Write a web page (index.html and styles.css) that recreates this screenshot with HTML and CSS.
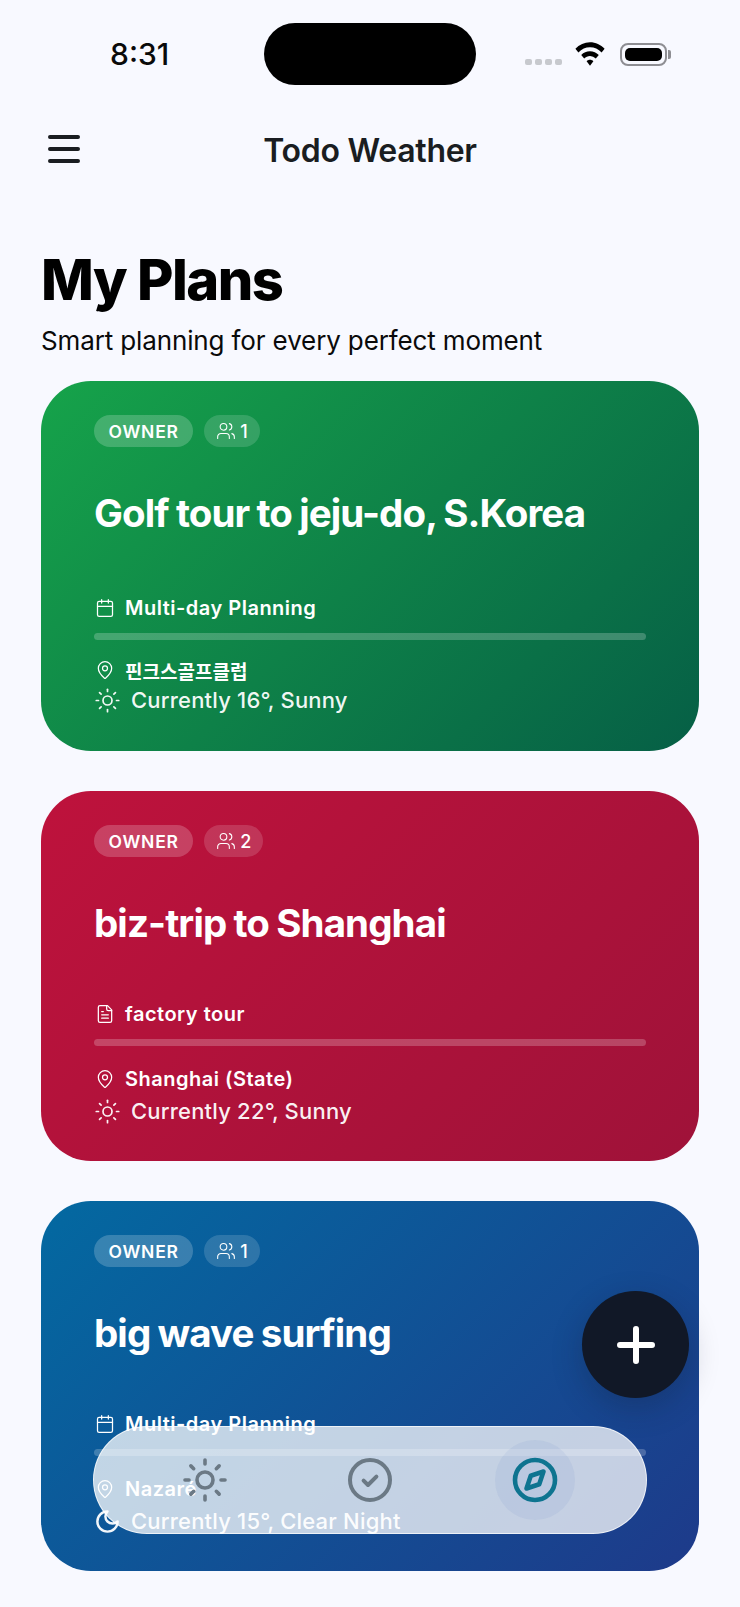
FILE: index.html
```html
<!DOCTYPE html>
<html lang="en">
<head>
<meta charset="utf-8">
<title>Todo Weather</title>
<link rel="stylesheet" href="styles.css">
</head>
<body>
<svg class="defs" width="0" height="0" aria-hidden="true">
  <defs>
    <symbol id="i-users" viewBox="0 0 24 24"><path d="M16 21v-2a4 4 0 0 0-4-4H6a4 4 0 0 0-4 4v2"/><circle cx="9" cy="7" r="4"/><path d="M22 21v-2a4 4 0 0 0-3-3.87"/><path d="M16 3.13a4 4 0 0 1 0 7.75"/></symbol>
    <symbol id="i-calendar" viewBox="0 0 24 24"><path d="M8 2v4"/><path d="M16 2v4"/><rect x="3" y="4" width="18" height="18" rx="2"/><path d="M3 10h18"/></symbol>
    <symbol id="i-file" viewBox="0 0 24 24"><path d="M15 2H6a2 2 0 0 0-2 2v16a2 2 0 0 0 2 2h12a2 2 0 0 0 2-2V7Z"/><path d="M14 2v4a2 2 0 0 0 2 2h4"/><path d="M10 9H8"/><path d="M16 13H8"/><path d="M16 17H8"/></symbol>
    <symbol id="i-pin" viewBox="0 0 24 24"><path d="M20 10c0 5-5.5 10.2-7.4 11.8a1 1 0 0 1-1.2 0C9.5 20.2 4 15 4 10a8 8 0 0 1 16 0"/><circle cx="12" cy="10" r="3"/></symbol>
    <symbol id="i-sun" viewBox="0 0 24 24"><circle cx="12" cy="12" r="4"/><path d="M12 2v2"/><path d="M12 20v2"/><path d="m4.93 4.93 1.41 1.41"/><path d="m17.66 17.66 1.41 1.41"/><path d="M2 12h2"/><path d="M20 12h2"/><path d="m6.34 17.66-1.41 1.41"/><path d="m19.07 4.93-1.41 1.41"/></symbol>
    <symbol id="i-moon" viewBox="0 0 24 24"><path d="M12 3a6 6 0 0 0 9 9 9 9 0 1 1-9-9Z"/></symbol>
  </defs>
</svg>

<div class="screen">
  <div class="status">
    <span class="time">8:31</span>
    <span class="island"></span>
    <div class="status-icons">
      <span class="dots"><i></i><i></i><i></i><i></i></span>
      <svg class="wifi" viewBox="0 3 32 21" preserveAspectRatio="none"><path d="M16 3.2c5.600 0 10.700 2.100 14.600 5.700l-3 3.200A17 17 0 0 0 16 7.500a17 17 0 0 0-11.600 4.600l-3-3.200A21.400 21.400 0 0 1 16 3.200Z"/><path d="M16 11c3.400 0 6.400 1.200 8.800 3.300l-3 3.200A8.700 8.700 0 0 0 16 15.300c-2.200 0-4.200.8-5.800 2.200l-3-3.200A13 13 0 0 1 16 11Z"/><path d="M16 18.600c1.300 0 2.500.5 3.400 1.300L16 23.800l-3.400-3.900c.9-.8 2.100-1.300 3.400-1.300Z"/></svg>
      <span class="battery"><span class="battery-fill"></span></span>
    </div>
  </div>

  <header class="topbar">
    <svg class="menu" viewBox="0 0 32 28"><path d="M2 2h28M2 14h28M2 26h28"/></svg>
    <h2 class="app-title">Todo Weather</h2>
  </header>

  <section class="intro">
    <h1>My Plans</h1>
    <p>Smart planning for every perfect moment</p>
  </section>

  <main class="plans">
    <article class="card card-green">
      <div class="pills">
        <span class="pill pill-owner">OWNER</span>
        <span class="pill pill-count"><svg class="ico ico-users"><use href="#i-users"/></svg>1</span>
      </div>
      <h3 class="plan-title">Golf tour to jeju-do, S.Korea</h3>
      <div class="row note note-tall"><svg class="ico"><use href="#i-calendar"/></svg>Multi-day Planning</div>
      <div class="track"></div>
      <div class="row place place-close"><svg class="ico"><use href="#i-pin"/></svg><span class="hangul">핀크스골프클럽</span></div>
      <div class="weather"><svg class="ico ico-weather"><use href="#i-sun"/></svg>Currently 16°, Sunny</div>
    </article>

    <article class="card card-red">
      <div class="pills">
        <span class="pill pill-owner">OWNER</span>
        <span class="pill pill-count"><svg class="ico ico-users"><use href="#i-users"/></svg>2</span>
      </div>
      <h3 class="plan-title">biz-trip to Shanghai</h3>
      <div class="row note"><svg class="ico"><use href="#i-file"/></svg>factory tour</div>
      <div class="track"></div>
      <div class="row place"><svg class="ico"><use href="#i-pin"/></svg>Shanghai (State)</div>
      <div class="weather"><svg class="ico ico-weather"><use href="#i-sun"/></svg>Currently 22°, Sunny</div>
    </article>

    <article class="card card-blue">
      <div class="pills">
        <span class="pill pill-owner">OWNER</span>
        <span class="pill pill-count"><svg class="ico ico-users"><use href="#i-users"/></svg>1</span>
      </div>
      <h3 class="plan-title">big wave surfing</h3>
      <div class="row note"><svg class="ico"><use href="#i-calendar"/></svg>Multi-day Planning</div>
      <div class="track"></div>
      <div class="row place"><svg class="ico"><use href="#i-pin"/></svg>Nazaré</div>
      <div class="weather"><svg class="ico ico-weather ico-moon"><use href="#i-moon"/></svg>Currently 15°, Clear Night</div>
    </article>
  </main>

  <button class="fab" aria-label="Add plan"><svg viewBox="0 0 38 38"><path d="M19 3v32M3 19h32"/></svg></button>

  <nav class="tabbar">
    <a class="tab"><svg class="tab-icon tab-sun"><use href="#i-sun"/></svg></a>
    <a class="tab"><svg class="tab-icon" viewBox="0 0 24 24"><circle cx="12" cy="12" r="10"/><path d="m8.800 12.300 2.200 2.200 4.200-4.200"/></svg></a>
    <a class="tab tab-active"><span class="tab-bubble"><svg class="tab-icon" viewBox="0 0 24 24"><circle cx="12" cy="12" r="10"/><polygon points="16.240 7.760 14.120 14.120 7.760 16.240 9.880 9.880"/></svg></span></a>
  </nav>
</div>
</body>
</html>
```

FILE: styles.css
```css
* { box-sizing: border-box; }

html, body {
  margin: 0;
  padding: 0;
  background: #f8f9ff;
}

body {
  font-family: Inter, "Noto Sans CJK KR", "Liberation Sans", sans-serif;
  color: #000;
}

.defs { position: absolute; }

.screen {
  position: relative;
  width: 740px;
  height: 1607px;
  overflow: hidden;
  background: #f8f9ff;
}

/* status bar */
.status {
  display: grid;
  grid-template-columns: 264px 212px 1fr;
  height: 62px;
  margin-top: 23px;
  align-items: center;
}
.time {
  justify-self: start;
  padding-left: 110px;
  font-size: 30px;
  font-weight: 500;
  line-height: 62px;
  color: #0a0a0a;
}
.island {
  height: 62px;
  border-radius: 31px;
  background: #000;
}
.status-icons {
  display: flex;
  align-items: center;
  padding-left: 49px;
}
.dots {
  display: flex;
  gap: 3px;
  margin-top: 16px;
  margin-right: 12px;
}
.dots i {
  width: 7px;
  height: 6px;
  border-radius: 2px;
  background: #c7c9ce;
}
.wifi {
  width: 32px;
  height: 24px;
  margin-right: 14px;
  fill: #000;
}
.battery {
  position: relative;
  display: block;
  width: 47px;
  height: 23px;
  padding: 3px;
  border: 2px solid #8e8e93;
  border-radius: 8px;
}
.battery::after {
  content: "";
  position: absolute;
  right: -6px;
  top: 5px;
  width: 3px;
  height: 9px;
  border-radius: 0 2px 2px 0;
  background: #8e8e93;
}
.battery-fill {
  display: block;
  height: 100%;
  border-radius: 5px;
  background: #000;
}

/* top bar */
.topbar {
  position: relative;
  display: flex;
  align-items: center;
  justify-content: center;
  height: 64px;
  margin-top: 33px;
}
.menu {
  position: absolute;
  left: 48px;
  top: 17px;
  width: 32px;
  height: 28px;
  fill: none;
  stroke: #1a1d21;
  stroke-width: 4;
  stroke-linecap: round;
}
.app-title {
  margin: 0;
  font-size: 32px;
  font-weight: 600;
  letter-spacing: -0.27px;
  color: #1a1d21;
}

/* intro */
.intro { padding: 0 41px; margin-top: 65px; }
.intro h1 {
  margin: 0;
  font-size: 56px;
  line-height: 66px;
  font-weight: 800;
  letter-spacing: -1.500px;
  color: #000;
}
.intro p {
  margin: 10px 0 0;
  font-size: 26px;
  line-height: 36px;
  font-weight: 400;
  letter-spacing: -0.13px;
  color: #0a0a0a;
}

/* cards */
.plans {
  display: flex;
  flex-direction: column;
  gap: 40px;
  margin-top: 22px;
  padding: 0 41px;
}
.card {
  height: 370px;
  padding: 34px 53px 0;
  border-radius: 50px;
  color: #fff;
}
.card-green { background: linear-gradient(135deg, #16a34a, #065f46); }
.card-red { background: linear-gradient(135deg, #be123c, #9f1239); }
.card-blue { background: linear-gradient(135deg, #0369a1, #1e3a8a); }

.pills { display: flex; gap: 11px; }
.pill {
  display: flex;
  align-items: center;
  height: 32px;
  padding: 0 14px;
  border-radius: 16px;
  font-size: 17.500px;
  font-weight: 600;
}
.pill-owner {
  padding: 0 14.500px;
  background: rgba(255, 255, 255, 0.2);
  letter-spacing: 0.8px;
}
.pill-count {
  gap: 4px;
  padding: 0 12px;
  background: rgba(255, 255, 255, 0.15);
  font-size: 18px;
  font-weight: 500;
}

.plan-title {
  margin: 40px 0 0;
  font-size: 38.500px;
  line-height: 52px;
  font-weight: 700;
  letter-spacing: -0.9px;
  word-spacing: -1px;
}

.ico {
  flex: none;
  width: 20px;
  height: 20px;
  fill: none;
  stroke: currentColor;
  stroke-width: 1.500;
  stroke-linecap: round;
  stroke-linejoin: round;
}
.ico-users { width: 20px; height: 20px; stroke-width: 1.300; }
.ico-weather { width: 27px; height: 27px; stroke-width: 1.500; }
.ico-moon { stroke-width: 2.200; }

.row {
  display: flex;
  align-items: center;
  gap: 10px;
  height: 30px;
  padding-left: 1px;
  font-size: 20px;
  font-weight: 600;
  letter-spacing: 0.5px;
}
.note { margin-top: 50px; }
.note-tall { margin-top: 54px; }
.track {
  height: 7px;
  margin-top: 10px;
  border-radius: 4px;
  background: rgba(255, 255, 255, 0.22);
}
.place { margin-top: 18px; }
.place-close { height: 26px; margin-top: 17px; }
.hangul { font-size: 19px; letter-spacing: 0; }

.weather {
  display: flex;
  align-items: center;
  gap: 10px;
  height: 32px;
  margin-top: 1px;
  font-size: 22px;
  font-weight: 500;
  letter-spacing: 0.2px;
  color: rgba(255, 255, 255, 0.95);
}

/* floating */
.fab {
  position: absolute;
  left: 582px;
  top: 1291px;
  display: flex;
  align-items: center;
  justify-content: center;
  width: 107px;
  height: 107px;
  padding: 0;
  border: 0;
  border-radius: 50%;
  background: #111827;
  box-shadow: 0 10px 30px rgba(17, 24, 39, 0.25);
}
.fab svg {
  width: 38px;
  height: 38px;
  fill: none;
  stroke: #fff;
  stroke-width: 6;
  stroke-linecap: round;
}

.tabbar {
  position: absolute;
  left: 93px;
  top: 1426px;
  display: flex;
  width: 554px;
  height: 108px;
  padding: 0 28px;
  border: 1.500px solid rgba(255, 255, 255, 0.7);
  border-radius: 54px;
  background: rgba(255, 255, 255, 0.75);
}
.tab {
  flex: 1;
  display: flex;
  align-items: center;
  justify-content: center;
}
.tab-icon {
  width: 48px;
  height: 48px;
  fill: none;
  stroke: #6b7985;
  stroke-width: 2;
  stroke-linecap: round;
  stroke-linejoin: round;
}
.tab-sun { stroke-width: 1.800; }
.tab-bubble {
  display: flex;
  align-items: center;
  justify-content: center;
  width: 80px;
  height: 80px;
  border-radius: 50%;
  background: rgba(56, 94, 184, 0.07);
}
.tab-active .tab-icon { stroke: #0e7490; stroke-width: 2.300; }
```
